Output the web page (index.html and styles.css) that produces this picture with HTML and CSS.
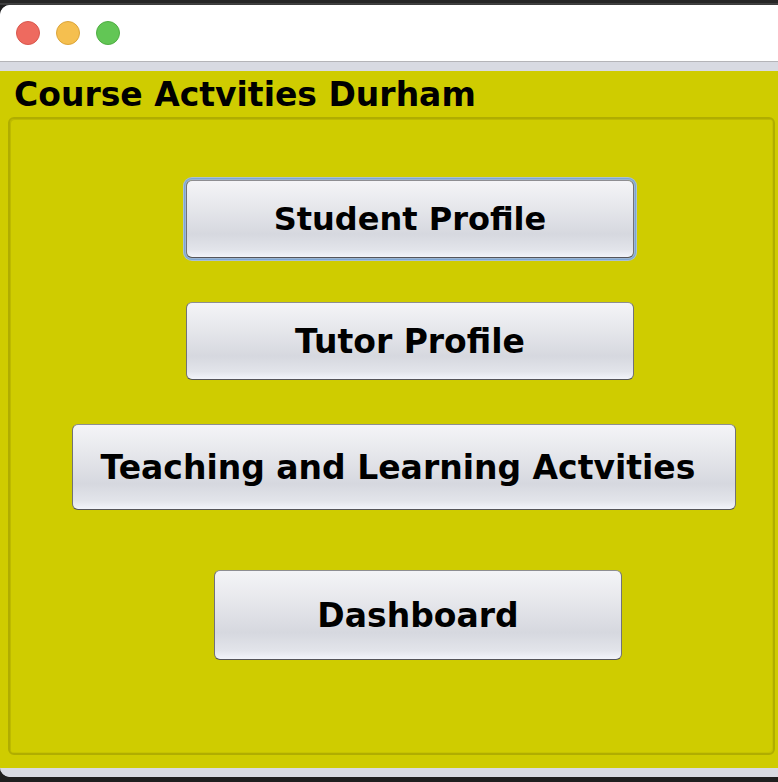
FILE: index.html
```html
<!DOCTYPE html>
<html lang="en">
<head>
<meta charset="utf-8">
<title>Course Actvities Durham</title>
<link rel="stylesheet" href="styles.css">
</head>
<body>
<div class="screen">
  <div class="window">
    <div class="titlebar">
      <span class="light red"></span>
      <span class="light yellow"></span>
      <span class="light green"></span>
    </div>
    <div class="strip"></div>
    <div class="content">
      <h1 class="heading">Course Actvities Durham</h1>
      <div class="panel">
        <button class="btn btn-student focused">Student Profile</button>
        <button class="btn btn-tutor">Tutor Profile</button>
        <button class="btn btn-teaching">Teaching and Learning Actvities</button>
        <button class="btn btn-dashboard">Dashboard</button>
      </div>
    </div>
    <div class="strip strip-bottom"></div>
  </div>
</div>
</body>
</html>
```

FILE: styles.css
```css
html, body {
  margin: 0;
  padding: 0;
  background: #1f1f1f;
  width: 778px;
  height: 782px;
  overflow: hidden;
}

.screen {
  padding-top: 5px;
  height: 777px;
  background: linear-gradient(to bottom, #262626 0, #262626 3px, #5a5a5a 4px, #1f1f1f 5px);
}

.window {
  width: 790px;
  height: 772px;
  border-radius: 10px;
  overflow: hidden;
  background: #d8dae2;
  display: flex;
  flex-direction: column;
}

.titlebar {
  background: #ffffff;
  border-bottom: 1px solid #b4b4b8;
  display: flex;
  align-items: center;
  padding-left: 16px;
  gap: 16px;
  box-sizing: border-box;
  flex: none;
  height: 57px;
}

.light {
  width: 24px;
  height: 24px;
  border-radius: 50%;
  box-sizing: border-box;
}
.red { background: #ee6a5f; border: 1px solid #d9574d; }
.yellow { background: #f5bf4f; border: 1px solid #dca53a; }
.green { background: #62c655; border: 1px solid #4fae43; }

.strip {
  height: 9px;
  background: #d8dae2;
  flex: none;
}

.content {
  background: #cfcc00;
  flex: none;
  height: 697px;
  display: flex;
  flex-direction: column;
  padding: 0 3px 13px 8px;
  box-sizing: border-box;
  width: 778px;
}

.heading {
  margin: 0;
  height: 46px;
  padding: 2px 0 0 6px;
  box-sizing: border-box;
  font-family: "DejaVu Sans", Verdana, sans-serif;
  font-weight: bold;
  font-size: 33px;
  line-height: 44px;
  color: #000;
  white-space: nowrap;
  flex: none;
}

.panel {
  flex: 1;
  border: 2px solid #b0ad00;
  border-radius: 6px;
  box-shadow: inset 1px 1px 0 #bdba00, inset -1px -1px 0 #c6c300;
  display: flex;
  flex-direction: column;
  align-items: flex-start;
  padding-top: 61px;
  box-sizing: border-box;
}

.btn {
  font-family: "DejaVu Sans", Verdana, sans-serif;
  font-weight: bold;
  font-size: 33px;
  color: #000;
  border: 1px solid #727276;
  border-bottom-color: #55555a;
  border-top-color: #8e8e92;
  border-radius: 6px;
  background: linear-gradient(to bottom, #f4f4f7 0%, #e8e9ed 30%, #d6d8df 70%, #e2e4ea 90%, #f2f4fa 100%);
  padding: 0;
  box-sizing: border-box;
  white-space: nowrap;
  flex: none;
}

.focused {
  box-shadow: 0 0 0 1px #9cb6d4, 0 0 0 2px #7da6d2, 0 0 0 3px #a9c0d6;
}

.btn-student {
  margin-left: 176px;
  width: 448px;
  height: 78px;
  font-size: 32px;
}

.btn-tutor {
  margin-left: 176px;
  margin-top: 44px;
  width: 448px;
  height: 78px;
}

.btn-teaching {
  margin-left: 62px;
  margin-top: 44px;
  width: 664px;
  height: 86px;
  padding-right: 12px;
}

.btn-dashboard {
  margin-left: 204px;
  margin-top: 60px;
  width: 408px;
  height: 90px;
}
```
